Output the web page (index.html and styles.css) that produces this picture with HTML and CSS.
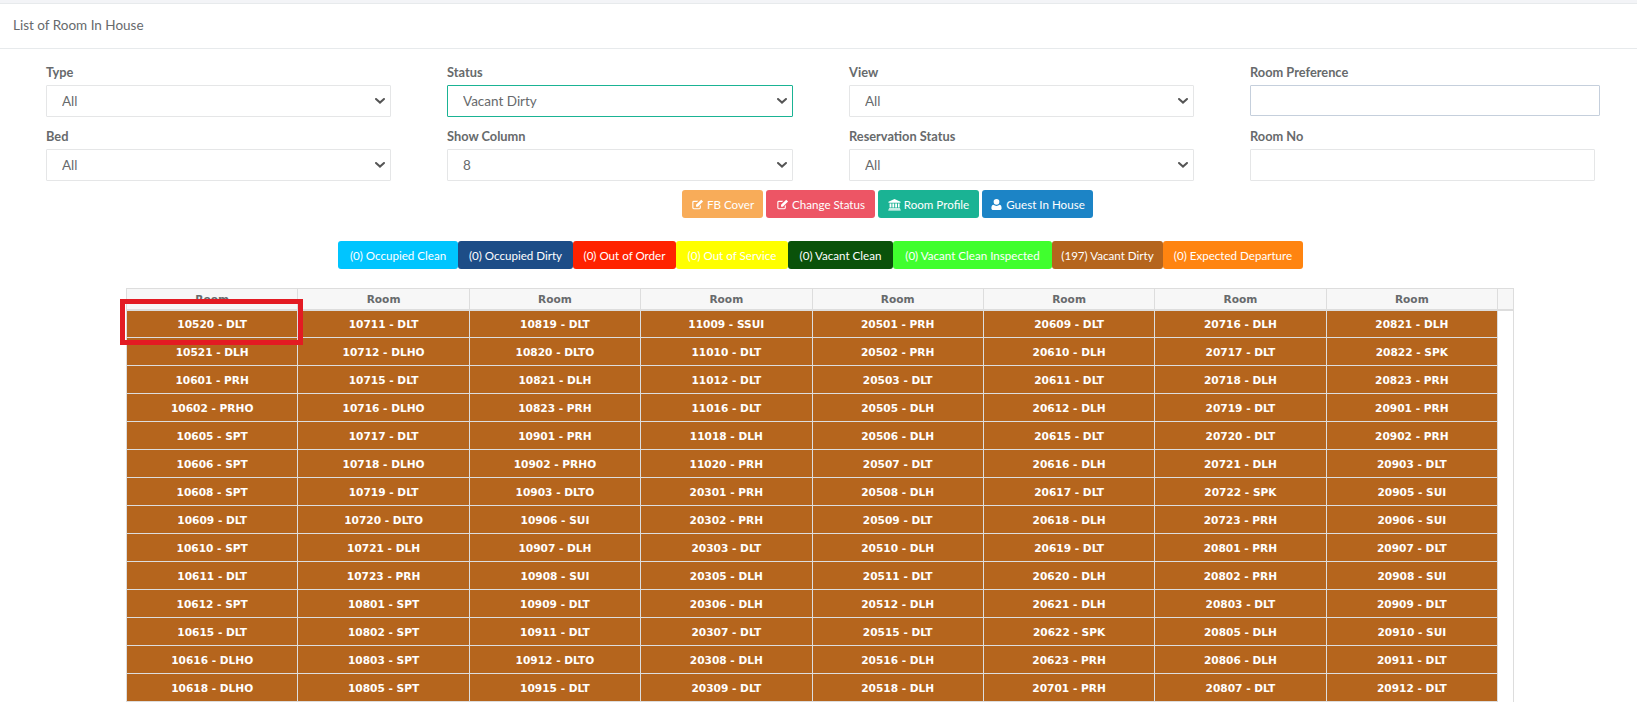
FILE: index.html
```html
<!DOCTYPE html>
<html lang="en">

<head>
    <meta charset="UTF-8">
    <title>List of Room In House</title>
    <link rel="stylesheet" href="styles.css">
</head>

<body>
    <div class="page-title">List of Room In House</div>

    <form class="filters">
        <div class="field">
            <label>Type</label>
            <select><option>All</option></select>
        </div>
        <div class="field">
            <label>Status</label>
            <select class="focused"><option>Vacant Dirty</option></select>
        </div>
        <div class="field">
            <label>View</label>
            <select><option>All</option></select>
        </div>
        <div class="field">
            <label>Room Preference</label>
            <input type="text" class="input-pref">
        </div>
        <div class="field">
            <label>Bed</label>
            <select><option>All</option></select>
        </div>
        <div class="field">
            <label>Show Column</label>
            <select><option>8</option></select>
        </div>
        <div class="field">
            <label>Reservation Status</label>
            <select><option>All</option></select>
        </div>
        <div class="field">
            <label>Room No</label>
            <input type="text" class="input-no">
        </div>
    </form>

    <div class="actions">
        <a class="btn btn-warning">
            <svg class="icon" viewBox="0 0 14 14"><path d="M10.6 7.6v3a1.6 1.6 0 0 1-1.6 1.6H3A1.6 1.6 0 0 1 1.4 10.600V4.600A1.600 1.600 0 0 1 3 3h4.800l-1.200 1.200H3a.4.4 0 0 0-.4.4v6a.4.4 0 0 0 .4.4h6a.4.4 0 0 0 .4-.4V8.800zM5.400 7.400l5.600-5.600 2 2-5.600 5.600H5.400z"/></svg>
            FB Cover
        </a>
        <a class="btn btn-danger">
            <svg class="icon" viewBox="0 0 14 14"><path d="M10.6 7.6v3a1.6 1.6 0 0 1-1.6 1.6H3A1.6 1.6 0 0 1 1.4 10.600V4.600A1.600 1.600 0 0 1 3 3h4.800l-1.200 1.200H3a.4.4 0 0 0-.4.4v6a.4.4 0 0 0 .4.4h6a.4.4 0 0 0 .4-.4V8.800zM5.400 7.400l5.600-5.600 2 2-5.600 5.600H5.400z"/></svg>
            Change Status
        </a>
        <a class="btn btn-primary">
            <svg class="icon" viewBox="0 0 14 14"><path d="M7 1l6.500 3v1H.5V4zM1.700 5.800h2v4.500h-2zM4.700 5.800h2v4.500h-2zM7.700 5.800h2v4.500h-2zM10.700 5.800h1.800v4.500h-1.800zM1 11h12v1H1zM.3 12.400h13.400v1H.3z"/></svg>
            Room Profile
        </a>
        <a class="btn btn-success">
            <svg class="icon" viewBox="0 0 14 14"><path d="M7 1a3.100 3.100 0 1 1 0 6.200A3.100 3.100 0 0 1 7 1zM3.800 7.400C4.700 8.200 5.800 8.600 7 8.600s2.300-.4 3.200-1.200c1.600.2 2.300 1.600 2.300 3.600 0 1.200-.8 2-2 2h-7c-1.200 0-2-.8-2-2 0-2 .7-3.400 2.300-3.600z"/></svg>
            Guest In House
        </a>
    </div>

    <div class="legend">
        <span class="tag tag-occ-clean">(0) Occupied Clean</span>
        <span class="tag tag-occ-dirty">(0) Occupied Dirty</span>
        <span class="tag tag-ooo">(0) Out of Order</span>
        <span class="tag tag-oos">(0) Out of Service</span>
        <span class="tag tag-vac-clean">(0) Vacant Clean</span>
        <span class="tag tag-vac-insp">(0) Vacant Clean Inspected</span>
        <span class="tag tag-vac-dirty">(197) Vacant Dirty</span>
        <span class="tag tag-exp">(0) Expected Departure</span>
    </div>

    <div class="room-wrap">
        <table class="rooms">
            <thead>
                <tr><th>Room</th><th>Room</th><th>Room</th><th>Room</th><th>Room</th><th>Room</th><th>Room</th><th>Room</th><th class="gutter"></th></tr>
            </thead>
            <tbody>
                <tr><td>10520 - DLT</td><td>10711 - DLT</td><td>10819 - DLT</td><td>11009 - SSUI</td><td>20501 - PRH</td><td>20609 - DLT</td><td>20716 - DLH</td><td>20821 - DLH</td><td class="gutter"></td></tr>
                <tr><td>10521 - DLH</td><td>10712 - DLHO</td><td>10820 - DLTO</td><td>11010 - DLT</td><td>20502 - PRH</td><td>20610 - DLH</td><td>20717 - DLT</td><td>20822 - SPK</td><td class="gutter"></td></tr>
                <tr><td>10601 - PRH</td><td>10715 - DLT</td><td>10821 - DLH</td><td>11012 - DLT</td><td>20503 - DLT</td><td>20611 - DLT</td><td>20718 - DLH</td><td>20823 - PRH</td><td class="gutter"></td></tr>
                <tr><td>10602 - PRHO</td><td>10716 - DLHO</td><td>10823 - PRH</td><td>11016 - DLT</td><td>20505 - DLH</td><td>20612 - DLH</td><td>20719 - DLT</td><td>20901 - PRH</td><td class="gutter"></td></tr>
                <tr><td>10605 - SPT</td><td>10717 - DLT</td><td>10901 - PRH</td><td>11018 - DLH</td><td>20506 - DLH</td><td>20615 - DLT</td><td>20720 - DLT</td><td>20902 - PRH</td><td class="gutter"></td></tr>
                <tr><td>10606 - SPT</td><td>10718 - DLHO</td><td>10902 - PRHO</td><td>11020 - PRH</td><td>20507 - DLT</td><td>20616 - DLH</td><td>20721 - DLH</td><td>20903 - DLT</td><td class="gutter"></td></tr>
                <tr><td>10608 - SPT</td><td>10719 - DLT</td><td>10903 - DLTO</td><td>20301 - PRH</td><td>20508 - DLH</td><td>20617 - DLT</td><td>20722 - SPK</td><td>20905 - SUI</td><td class="gutter"></td></tr>
                <tr><td>10609 - DLT</td><td>10720 - DLTO</td><td>10906 - SUI</td><td>20302 - PRH</td><td>20509 - DLT</td><td>20618 - DLH</td><td>20723 - PRH</td><td>20906 - SUI</td><td class="gutter"></td></tr>
                <tr><td>10610 - SPT</td><td>10721 - DLH</td><td>10907 - DLH</td><td>20303 - DLT</td><td>20510 - DLH</td><td>20619 - DLT</td><td>20801 - PRH</td><td>20907 - DLT</td><td class="gutter"></td></tr>
                <tr><td>10611 - DLT</td><td>10723 - PRH</td><td>10908 - SUI</td><td>20305 - DLH</td><td>20511 - DLT</td><td>20620 - DLH</td><td>20802 - PRH</td><td>20908 - SUI</td><td class="gutter"></td></tr>
                <tr><td>10612 - SPT</td><td>10801 - SPT</td><td>10909 - DLT</td><td>20306 - DLH</td><td>20512 - DLH</td><td>20621 - DLH</td><td>20803 - DLT</td><td>20909 - DLT</td><td class="gutter"></td></tr>
                <tr><td>10615 - DLT</td><td>10802 - SPT</td><td>10911 - DLT</td><td>20307 - DLT</td><td>20515 - DLT</td><td>20622 - SPK</td><td>20805 - DLH</td><td>20910 - SUI</td><td class="gutter"></td></tr>
                <tr><td>10616 - DLHO</td><td>10803 - SPT</td><td>10912 - DLTO</td><td>20308 - DLH</td><td>20516 - DLH</td><td>20623 - PRH</td><td>20806 - DLH</td><td>20911 - DLT</td><td class="gutter"></td></tr>
                <tr><td>10618 - DLHO</td><td>10805 - SPT</td><td>10915 - DLT</td><td>20309 - DLT</td><td>20518 - DLH</td><td>20701 - PRH</td><td>20807 - DLT</td><td>20912 - DLT</td><td class="gutter"></td></tr>
            </tbody>
        </table>
        <div class="marker"></div>
    </div>
</body>

</html>
```

FILE: styles.css
```css
* {
    box-sizing: border-box;
}

html,
body {
    height: 702px;
    overflow: hidden;
}

body {
    margin: 0;
    font-family: Lato, Arial, sans-serif;
    font-size: 13px;
    color: #676a6c;
    background: #fff;
    border-top: 3px solid #f3f4f7;
}

.page-title {
    height: 46px;
    padding: 13px 13px 0;
    font-size: 13.5px;
    line-height: 17px;
    border-top: 1px solid #e7eaec;
    border-bottom: 1px solid #e7eaec;
}

.filters {
    display: grid;
    grid-template-columns: 344.5px 345.5px 344.5px 350px;
    column-gap: 56.5px;
    row-gap: 11px;
    padding: 15px 0 0 46px;
}

.field label {
    display: block;
    height: 21px;
    font-size: 12.8px;
    line-height: 16px;
    font-weight: 700;
}

.field select,
.field input {
    display: block;
    width: 100%;
    height: 32px;
    font-family: Lato, Arial, sans-serif;
    font-size: 13.5px;
    color: #676a6c;
    background: #fff;
    border: 1px solid #e5e6e7;
    border-radius: 1px;
    outline: none;
}

.field select {
    padding: 0 15px;
    appearance: none;
    background-image: url("data:image/svg+xml,%3Csvg xmlns='http://www.w3.org/2000/svg' width='10' height='6' viewBox='0 0 10 6'%3E%3Cpath d='M1 1l4 3.600L9 1' fill='none' stroke='%23555' stroke-width='2' stroke-linecap='round'/%3E%3C/svg%3E");
    background-repeat: no-repeat;
    background-position: right 5px center;
}

.field select.focused {
    border-color: #1ab394;
}

.field .input-pref {
    height: 31px;
    border-color: #c5cfdc;
}

.field .input-no {
    width: 344.5px;
}

.actions {
    display: flex;
    gap: 3px;
    margin-top: 9px;
    padding-left: 682px;
}

.btn {
    display: flex;
    align-items: center;
    justify-content: center;
    gap: 3px;
    height: 28px;
    font-size: 11.6px;
    color: #fff;
    border-radius: 3px;
    white-space: nowrap;
}

.btn-warning {
    width: 81px;
    background-color: #f8ac59;
}

.btn-danger {
    width: 109px;
    background-color: #ed5565;
}

.btn-primary {
    width: 101px;
    background-color: #1ab394;
}

.btn-success {
    width: 111px;
    background-color: #1c84c6;
}

.icon {
    width: 13px;
    height: 13px;
    fill: #fff;
    flex: none;
}

.legend {
    display: flex;
    margin-top: 23px;
    padding-left: 338px;
}

.tag {
    display: flex;
    align-items: center;
    justify-content: center;
    height: 28px;
    font-size: 11.6px;
    color: #fff;
    border-radius: 3px;
    white-space: nowrap;
}

.tag-occ-clean {
    width: 120px;
    background-color: #00c5ff;
}

.tag-occ-dirty {
    width: 115px;
    background-color: #1d4d87;
}

.tag-ooo {
    width: 103px;
    background-color: #ff2200;
}

.tag-oos {
    width: 112px;
    background-color: #ffff00;
}

.tag-vac-clean {
    width: 105px;
    background-color: #0a520a;
}

.tag-vac-insp {
    width: 159px;
    background-color: #40ff2e;
}

.tag-vac-dirty {
    width: 111px;
    background-color: #b5651d;
}

.tag-exp {
    width: 140px;
    background-color: #ff8410;
}

.room-wrap {
    position: relative;
    margin: 19px 0 0 126px;
    width: 1388px;
}

.rooms {
    width: 100%;
    border-collapse: collapse;
    table-layout: fixed;
    font-family: "DejaVu Sans", Verdana, sans-serif;
    font-size: 10.6px;
    font-weight: 700;
}

.rooms th {
    height: 21px;
    padding: 0;
    color: #676a6c;
    background: #f7f7f7;
    border: 1px solid #ddd;
    border-bottom-width: 2px;
}

.rooms td {
    height: 28px;
    padding: 0;
    text-align: center;
    color: #fff;
    background: #b5651d;
    border: 1px solid #ddd;
}

.rooms .gutter {
    width: 16px;
}

.rooms td.gutter {
    background: #fff;
    border-top: none;
    border-bottom: none;
}

.marker {
    position: absolute;
    left: -6px;
    top: 11px;
    width: 183px;
    height: 46px;
    border: 5px solid #e31b23;
}
```
